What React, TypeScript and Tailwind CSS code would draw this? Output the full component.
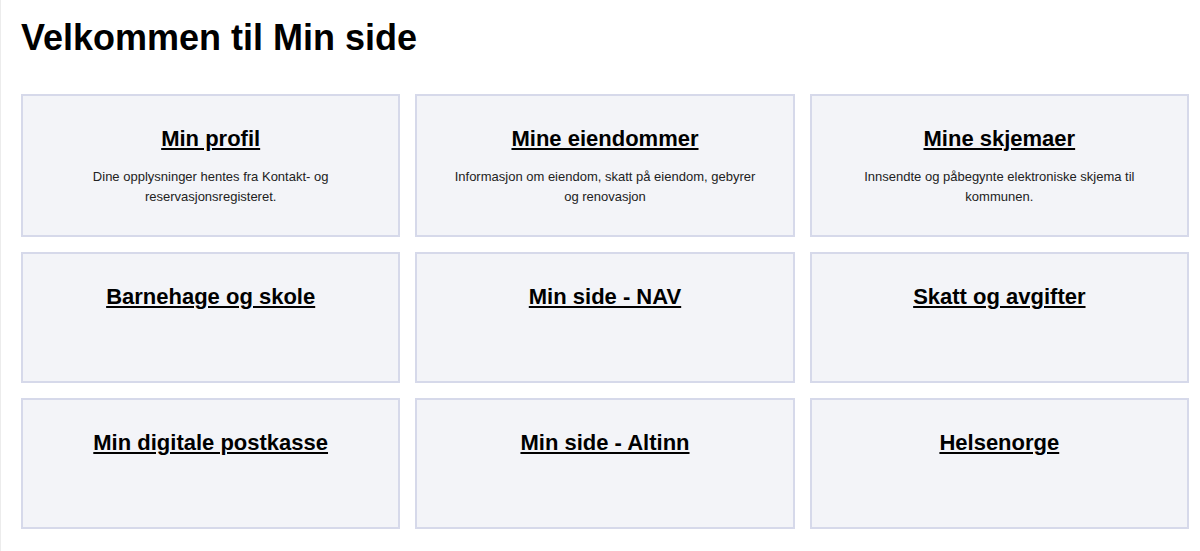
import React from "react";

const cards = [
  {
    title: "Min profil",
    text: "Dine opplysninger hentes fra Kontakt- og reservasjonsregisteret.",
  },
  {
    title: "Mine eiendommer",
    text: "Informasjon om eiendom, skatt på eiendom, gebyrer og renovasjon",
  },
  {
    title: "Mine skjemaer",
    text: "Innsendte og påbegynte elektroniske skjema til kommunen.",
  },
  { title: "Barnehage og skole" },
  { title: "Min side - NAV" },
  { title: "Skatt og avgifter" },
  { title: "Min digitale postkasse" },
  { title: "Min side - Altinn" },
  { title: "Helsenorge" },
];

function App() {
  return (
    <div className="min-h-[551px] bg-white border-l border-[#ececec] pl-[20px] pr-[11px] pt-[17px] font-['Liberation_Sans',Arial,sans-serif] text-black">
      <h1 className="text-[36px] leading-[41px] font-bold mb-[36px]">Velkommen til Min side</h1>
      <div className="grid grid-cols-3 gap-[15px]">
        {cards.map((card, index) => (
          <a
            key={index}
            href="#"
            className="flex flex-col items-center text-center min-h-[131px] border-2 border-[#d6d9ea] bg-[#f3f4f8] px-8 pt-[30px] pb-[28px]"
          >
            <h2 className="text-[22px] leading-[25px] font-bold underline">{card.title}</h2>
            {card.text && (
              <p className="mt-[16px] text-[13px] leading-[20px] text-[#222]">{card.text}</p>
            )}
          </a>
        ))}
      </div>
    </div>
  );
}

export default App;
